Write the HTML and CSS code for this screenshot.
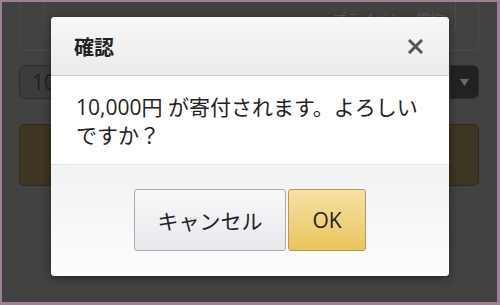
FILE: index.html
```html
<!DOCTYPE html>
<html lang="ja">
<head>
<meta charset="utf-8">
<link rel="stylesheet" href="styles.css">
</head>
<body>
<div class="screen">
  <div class="card">
    <div class="card-inner"><span class="card-link">プライバシー規約</span></div>
  </div>
  <div class="select">
    <span class="select-value">10,000円</span>
    <span class="select-arrow"><svg width="9" height="7" viewBox="0 0 9 7"><path d="M0 0H9L4.5 7Z" fill="#6a6a6a"/></svg></span>
  </div>
  <div class="donate"></div>

  <div class="dialog">
    <div class="dlg-head">
      <span class="dlg-title">確認</span>
      <svg class="dlg-close" width="15" height="15" viewBox="0 0 15 15"><path d="M2 2L13 13M13 2L2 13" stroke="#555" stroke-width="3" stroke-linecap="square"/></svg>
    </div>
    <div class="dlg-body">10,000円 が寄付されます。よろしい<br>ですか？</div>
    <div class="dlg-foot">
      <button class="btn btn-cancel">キャンセル</button>
      <button class="btn btn-ok">OK</button>
    </div>
  </div>
</div>
</body>
</html>
```
FILE: styles.css
```css
html, body {
  margin: 0;
  padding: 0;
}
body {
  background: #9b8098;
  width: 500px;
  height: 305px;
  overflow: hidden;
  font-family: "Open Sans", "Noto Sans CJK JP", sans-serif;
}
.screen {
  position: relative;
  margin: 2px 3px 0 2px;
  height: 300px;
  background: #424242;
  overflow: hidden;
  padding: 0 18px 0 17px;
  box-sizing: border-box;
  display: flex;
  flex-direction: column;
}
.card {
  margin-top: -30px;
  height: 79px;
  border: 1px solid #4c4c4c;
  border-radius: 6px;
  padding: 0 22px 0 23px;
  box-sizing: border-box;
  flex: none;
}
.card-inner {
  height: 60px;
  border: 1px solid #4c4c4c;
  border-top: none;
  border-radius: 0 0 6px 6px;
  box-sizing: border-box;
  display: flex;
  justify-content: flex-end;
  align-items: flex-end;
  padding: 0 11px 6px 0;
}
.card-link {
  font-size: 14px;
  line-height: 14px;
  color: #5e5e5e;
}
.select {
  margin-top: 14px;
  height: 34px;
  border: 1px solid #2c2c2c;
  border-radius: 6px;
  background: #3c3c3c;
  display: flex;
  box-sizing: border-box;
  overflow: hidden;
  flex: none;
}
.select-value {
  flex: 1;
  padding-left: 12px;
  font-size: 21px;
  line-height: 32px;
  color: #202020;
}
.select-arrow {
  width: 27px;
  background: #222;
  border-left: 1px solid #2c2c2c;
  display: flex;
  align-items: center;
  justify-content: center;
}
.donate {
  margin-top: 25px;
  height: 62px;
  border: 1px solid #302a1c;
  border-radius: 5px;
  background: #3e3522;
  box-sizing: border-box;
  flex: none;
}
.dialog {
  position: absolute;
  left: 49px;
  top: 15px;
  width: 398px;
  height: 259px;
  border-radius: 4px;
  overflow: hidden;
  box-shadow: 0 2px 10px rgba(0,0,0,0.45);
  display: flex;
  flex-direction: column;
  background: #fff;
}
.dlg-head {
  height: 59px;
  flex: none;
  box-sizing: border-box;
  border-bottom: 1px solid #cbcbcb;
  background: linear-gradient(#f7f7f7, #ebebeb);
  display: flex;
  align-items: center;
  justify-content: space-between;
  padding: 0 26px 0 23px;
}
.dlg-title {
  font-family: "Noto Sans CJK JP", sans-serif;
  font-weight: bold;
  font-size: 20px;
  line-height: 24px;
  color: #222;
  margin-top: 1px;
}
.dlg-close {
  display: block;
  margin-top: 1px;
}
.dlg-body {
  height: 89px;
  flex: none;
  box-sizing: border-box;
  padding: 17px 25px 0 25px;
  font-size: 21px;
  line-height: 28px;
  color: #222;
  border-bottom: 1px solid #e2e2e2;
}
.dlg-foot {
  flex: 1;
  background: linear-gradient(#f2f2f2, #fdfdfd);
  display: flex;
  justify-content: center;
  align-items: flex-start;
  gap: 2px;
  padding-top: 24px;
}
.btn {
  height: 62px;
  font-family: "Open Sans", "Noto Sans CJK JP", sans-serif;
  font-size: 21px;
  color: #222;
  border-radius: 3px;
  margin: 0;
  padding: 0;
  box-sizing: border-box;
}
.btn-cancel {
  width: 152px;
  border: 1px solid #a9abb0;
  background: linear-gradient(#f9f9fb, #e7e8ec);
}
.btn-ok {
  width: 78px;
  border: 1px solid #b89a52;
  background: linear-gradient(#f6e2a6, #eac45d);
}
```
